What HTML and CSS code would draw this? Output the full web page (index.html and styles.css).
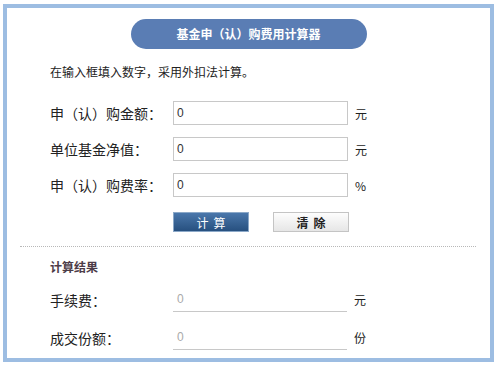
FILE: index.html
```html
<!DOCTYPE html>
<html>

<head>
    <title>基金申（认）购费用计算器</title>
    <link rel="stylesheet" href="styles.css">
</head>

<body>
    <div class="calc">
        <h1 class="title">基金申（认）购费用计算器</h1>
        <p class="tip">在输入框填入数字，采用外扣法计算。</p>

        <div class="form">
            <label for="amount">申（认）购金额：</label>
            <input type="text" id="amount" value="0">
            <span class="unit">元</span>

            <label for="nav">单位基金净值：</label>
            <input type="text" id="nav" value="0">
            <span class="unit">元</span>

            <label for="rate">申（认）购费率：</label>
            <input type="text" id="rate" value="0">
            <span class="unit">%</span>
        </div>

        <div class="buttons">
            <button class="btn-calc">计算</button>
            <button class="btn-clear">清除</button>
        </div>

        <hr class="divider">

        <h2 class="result-title">计算结果</h2>
        <div class="result">
            <span class="name">手续费：</span>
            <span class="value">0</span>
            <span class="unit">元</span>

            <span class="name">成交份额：</span>
            <span class="value">0</span>
            <span class="unit">份</span>
        </div>
    </div>
</body>

</html>
```

FILE: styles.css
```css
body {
    font-family: "Noto Sans CJK SC", "Liberation Sans", sans-serif;
    margin: 0;
    padding: 0;
    background: #fff;
    color: #222;
}

.calc {
    margin: 4px 6px 0 3px;
    height: 350px;
    border: 4px solid #9dbde2;
    box-sizing: content-box;
}

.title {
    width: 236px;
    height: 30px;
    margin: 11px auto 0;
    border-radius: 15px;
    background-color: #5a7db4;
    color: #fff;
    font-size: 12px;
    font-weight: bold;
    line-height: 30px;
    text-align: center;
}

.tip {
    margin: 13px 0 0 43px;
    font-size: 12px;
    line-height: 20px;
}

.form {
    display: grid;
    grid-template-columns: 123px 175px auto;
    row-gap: 12px;
    align-items: center;
    margin: 19px 0 0 43px;
}

.form label,
.result .name {
    font-size: 14px;
}

.form input {
    height: 24px;
    box-sizing: border-box;
    border: 1px solid #c8c8c8;
    padding: 0 3px;
    font-size: 12px;
    font-family: "Liberation Sans", sans-serif;
    color: #333;
}

.unit {
    margin-left: 7px;
    font-size: 12px;
}

.buttons {
    display: flex;
    gap: 24px;
    margin: 15px 0 0 166px;
}

.buttons button {
    width: 76px;
    height: 20px;
    font-size: 12px;
    font-family: "Noto Sans CJK SC", sans-serif;
    letter-spacing: 5px;
    padding: 0 0 0 5px;
    cursor: pointer;
}

.btn-calc {
    background: linear-gradient(#4a77ab, #27507f);
    border: 1px solid #8ba8c8;
    color: #fff;
}

.btn-clear {
    background: linear-gradient(#fdfdfd, #e6e6e6);
    border: 1px solid #c4c4c4;
    color: #222;
    font-weight: bold;
}

.divider {
    margin: 14px 14px 0 13px;
    border: none;
    border-top: 1px dotted #b8b8b8;
}

.result-title {
    margin: 10px 0 0 43px;
    font-size: 12px;
    font-weight: bold;
    color: #4d3c48;
    line-height: 20px;
}

.result {
    display: grid;
    grid-template-columns: 123px 174px auto;
    row-gap: 13px;
    align-items: center;
    margin: 10px 0 0 43px;
}

.result .value {
    height: 24px;
    line-height: 24px;
    padding-left: 4px;
    border-bottom: 1px solid #c8c8c8;
    font-size: 12px;
    font-family: "Liberation Sans", sans-serif;
    color: #aaa;
}
```
